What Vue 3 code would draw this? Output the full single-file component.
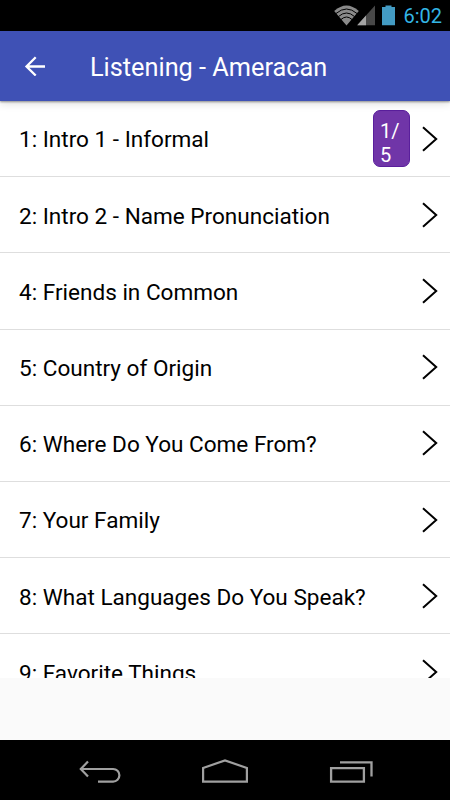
<script setup>
const lessons = [
  { id: 1, title: 'Intro 1 - Informal', progress: '1/ 5' },
  { id: 2, title: 'Intro 2 - Name Pronunciation' },
  { id: 4, title: 'Friends in Common' },
  { id: 5, title: 'Country of Origin' },
  { id: 6, title: 'Where Do You Come From?' },
  { id: 7, title: 'Your Family' },
  { id: 8, title: 'What Languages Do You Speak?' },
  { id: 9, title: 'Favorite Things' },
]
</script>

<template>
  <div class="screen">
    <div class="status">
      <svg class="status__icons" width="64" height="22" viewBox="0 0 64 22">
        <path d="M0.2 6Q12.500 -5 24.800 6L12.500 20.500Z" fill="#8a8a8a"/>
        <g fill="none" stroke="#000" stroke-width="1">
          <path d="M2 8.500Q12.500 -0.500 23 8.500"/>
          <path d="M4.500 11.500Q12.500 4.500 20.500 11.500"/>
          <path d="M7 14.500Q12.500 9.500 18 14.500"/>
        </g>
        <path d="M41 0.500V20.300H23.200Z" fill="#484848"/>
        <path d="M32 10.500V20.300H23.200Z" fill="#a4a4a4"/>
        <path d="M48 2H51.500V0.500H57.500V2H61V20.300H48Z" fill="#439bc3"/>
      </svg>
      <span class="status__time">6:02</span>
    </div>

    <header class="bar">
      <svg class="bar__back" width="22" height="20" viewBox="0 0 22 20" fill="none" stroke="#fff" stroke-width="2.300"><path d="M21 10.500H2.800M11.700 1.200L2.500 10.500L11.700 19.500"/></svg>
      <h1 class="bar__title">Listening - Ameracan</h1>
    </header>

    <main class="list">
      <div v-for="lesson in lessons" :key="lesson.id" class="row">
        <span class="row__title">{{ lesson.id }}: {{ lesson.title }}</span>
        <span v-if="lesson.progress" class="row__badge">{{ lesson.progress }}</span>
        <svg class="row__chevron" width="16" height="26" viewBox="0 0 16 26" fill="none" stroke="#000" stroke-width="2"><path d="M1 1.300L14.200 13L1 24.700"/></svg>
      </div>
    </main>

    <div class="spacer"></div>

    <nav class="nav">
      <svg width="42" height="26" viewBox="0 0 42 26" fill="none" stroke="#a0a0a0" stroke-width="2.200"><path d="M9 3.500L1.800 11L9 18.500M1.800 11H34.100A6.300 6.300 0 0 1 34.100 23.600H19"/></svg>
      <svg width="48" height="26" viewBox="0 0 48 26" fill="none" stroke="#a0a0a0" stroke-width="2.200"><path d="M2.100 10L24 2.400L45.900 10V23.600H2.100Z"/></svg>
      <svg width="44" height="26" viewBox="0 0 44 26" fill="none" stroke="#a0a0a0" stroke-width="2.300"><path d="M2.100 10.200H34.900V23.600H2.100ZM11 4.400H42.500V18.500"/></svg>
    </nav>
  </div>
</template>

<style>
body {
  margin: 0;
}
</style>

<style scoped>
.screen {
  display: flex;
  flex-direction: column;
  width: 450px;
  height: 800px;
  overflow: hidden;
  background: #fafafa;
  font-family: Roboto, sans-serif;
}

.status {
  display: flex;
  flex: none;
  align-items: center;
  justify-content: flex-end;
  gap: 5.500px;
  height: 31px;
  padding-right: 8px;
  box-sizing: border-box;
  background: #000;
}

.status__icons {
  display: block;
}

.status__time {
  padding-top: 1px;
  font-size: 20px;
  color: #33b5e5;
}

.bar {
  z-index: 1;
  display: flex;
  flex: none;
  align-items: center;
  gap: 44px;
  height: 70px;
  padding-left: 24px;
  background: #3f51b5;
  box-shadow: 0 1px 2px rgba(0, 0, 0, 0.4), 0 3px 8px rgba(0, 0, 0, 0.12);
}

.bar__back {
  flex: none;
}

.bar__title {
  margin: 0;
  padding-top: 3px;
  font-size: 25.300px;
  font-weight: 400;
  line-height: 30px;
  color: #fff;
  white-space: nowrap;
}

.list {
  flex: none;
  height: 576.500px;
  overflow: hidden;
  background: #fff;
}

.row {
  display: flex;
  align-items: center;
  height: 76.200px;
  padding: 0 12px 0 19px;
  box-sizing: border-box;
  border-bottom: 1px solid #dedede;
}

.row__title {
  flex: 1;
  padding-top: 3.600px;
  font-size: 22.550px;
  line-height: 28px;
  color: #000;
  white-space: nowrap;
}

.row__badge {
  width: 37px;
  height: 57px;
  margin-right: 12px;
  padding: 8px 6px 0;
  box-sizing: border-box;
  border: 1px solid #5a1f9c;
  border-radius: 7px;
  background: #7035a8;
  font-size: 20px;
  line-height: 24px;
  color: #fff;
}

.row__chevron {
  flex: none;
}

.spacer {
  flex: 1;
}

.nav {
  display: flex;
  flex: none;
  align-items: flex-end;
  justify-content: space-between;
  height: 60px;
  padding: 0 77px 16px 79px;
  box-sizing: border-box;
  background: #000;
}
</style>
